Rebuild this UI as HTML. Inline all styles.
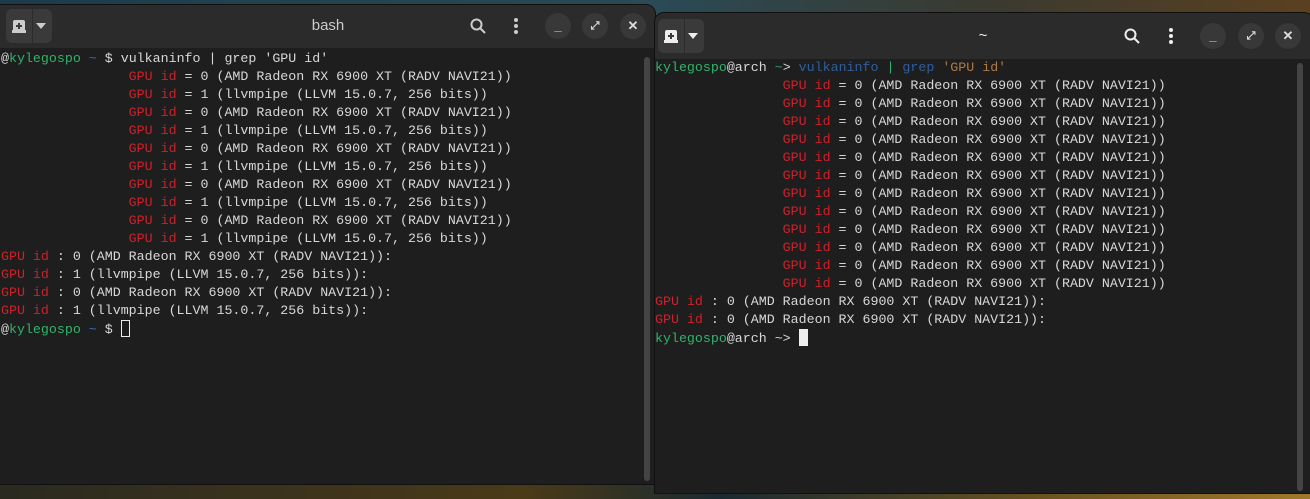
<!DOCTYPE html>
<html><head><meta charset="utf-8"><style>
*{margin:0;padding:0;box-sizing:border-box}
body{width:1310px;height:499px;overflow:hidden;position:relative;background:linear-gradient(90deg,#1d3a4a 0%,#2a4a55 50%,#3a3a30 75%,#5a4020 100%)}
.bot{position:absolute;left:0;top:470px;width:1310px;height:29px;background:linear-gradient(90deg,#2a2a20,#4a3a18 40%,#1a2a30 55%,#6a5420 80%,#a0782a)}
.win{position:absolute;background:#1e1e1e;border-radius:10px 10px 0 0;overflow:hidden;border:1px solid #111}
.hdr{position:absolute;left:0;top:0;right:0;background:#2b2b2b}
.grp{position:absolute;width:46px;height:34px;background:#3a3a3a;border-radius:6px}
.grp .sep{position:absolute;left:26px;top:0;width:1px;height:34px;background:#2b2b2b}
.circ{position:absolute;width:26px;height:26px;border-radius:50%;background:#383838;color:#ddd;font:bold 13px "Liberation Sans",sans-serif;text-align:center;line-height:26px}
.title{position:absolute;color:#ccc;font:15px "Liberation Sans",sans-serif;transform:translateX(-50%)}
.term{position:absolute;font:13.3px/18px "Liberation Mono",monospace;color:#d8d8d8;white-space:pre}
.r{color:#d0202a}.g{color:#2fb36a}.b{color:#2a6fbf}.db{color:#2f5f9f}.o{color:#b07a4a}
.cur{display:inline-block;width:9px;height:17px;border:1.5px solid #eee;vertical-align:-4px}
.sb{position:absolute;width:6px;background:#444;border-radius:3px}
</style></head><body>
<div class="bot"></div>
<div class="win" style="left:-10px;top:4px;width:666px;height:481px">
 <div class="hdr" style="height:43px"></div>
 <div class="grp" style="left:15px;top:4px"><div class="sep"></div>
  <svg style="position:absolute;left:6px;top:10px" width="14" height="14"><rect x="1" y="1" width="12" height="12" rx="2" fill="#ccc"/><path d="M7 4v6M4 7h6" stroke="#3a3a3a" stroke-width="2"/><rect x="0" y="11" width="14" height="3" fill="#ccc"/></svg>
  <svg style="position:absolute;left:30px;top:14px" width="10" height="6"><path d="M0 0h10L5 6z" fill="#ccc"/></svg>
 </div>
 <div class="title" style="left:337px;top:12px">bash</div>
 <svg style="position:absolute;left:479px;top:13px" width="16" height="16"><circle cx="6.5" cy="6.5" r="5" stroke="#ccc" stroke-width="2" fill="none"/><path d="M10 10l5 5" stroke="#ccc" stroke-width="2"/></svg>
 <svg style="position:absolute;left:522px;top:12px" width="6" height="18"><circle cx="3" cy="3" r="2" fill="#ccc"/><circle cx="3" cy="9" r="2" fill="#ccc"/><circle cx="3" cy="15" r="2" fill="#ccc"/></svg>
 <div class="circ" style="left:554px;top:8px">_</div>
 <div class="circ" style="left:591px;top:8px;font-size:11px">⤢</div>
 <div class="circ" style="left:629px;top:8px">✕</div>
 <div class="sb" style="left:653px;top:52px;height:424px"></div>
<div class="term" style="left:10px;top:45px">@<span class="g">kylegospo</span> <span class="b">~</span> $ vulkaninfo | grep 'GPU id'
                <span class="r">GPU id</span> = 0 (AMD Radeon RX 6900 XT (RADV NAVI21))
                <span class="r">GPU id</span> = 1 (llvmpipe (LLVM 15.0.7, 256 bits))
                <span class="r">GPU id</span> = 0 (AMD Radeon RX 6900 XT (RADV NAVI21))
                <span class="r">GPU id</span> = 1 (llvmpipe (LLVM 15.0.7, 256 bits))
                <span class="r">GPU id</span> = 0 (AMD Radeon RX 6900 XT (RADV NAVI21))
                <span class="r">GPU id</span> = 1 (llvmpipe (LLVM 15.0.7, 256 bits))
                <span class="r">GPU id</span> = 0 (AMD Radeon RX 6900 XT (RADV NAVI21))
                <span class="r">GPU id</span> = 1 (llvmpipe (LLVM 15.0.7, 256 bits))
                <span class="r">GPU id</span> = 0 (AMD Radeon RX 6900 XT (RADV NAVI21))
                <span class="r">GPU id</span> = 1 (llvmpipe (LLVM 15.0.7, 256 bits))
<span class="r">GPU id</span> : 0 (AMD Radeon RX 6900 XT (RADV NAVI21)):
<span class="r">GPU id</span> : 1 (llvmpipe (LLVM 15.0.7, 256 bits)):
<span class="r">GPU id</span> : 0 (AMD Radeon RX 6900 XT (RADV NAVI21)):
<span class="r">GPU id</span> : 1 (llvmpipe (LLVM 15.0.7, 256 bits)):
@<span class="g">kylegospo</span> <span class="b">~</span> $ <span class="cur"></span></div>
</div>
<div class="win" style="left:654px;top:12px;width:660px;height:482px">
 <div class="hdr" style="height:46px"></div>
 <div class="grp" style="left:3px;top:6px"><div class="sep"></div>
  <svg style="position:absolute;left:6px;top:10px" width="14" height="14"><rect x="1" y="1" width="12" height="12" rx="2" fill="#eee"/><path d="M7 4v6M4 7h6" stroke="#3a3a3a" stroke-width="2"/><rect x="0" y="11" width="14" height="3" fill="#eee"/></svg>
  <svg style="position:absolute;left:30px;top:14px" width="10" height="6"><path d="M0 0h10L5 6z" fill="#eee"/></svg>
 </div>
 <div class="title" style="left:328px;top:14px;color:#eee">~</div>
 <svg style="position:absolute;left:469px;top:15px" width="16" height="16"><circle cx="6.5" cy="6.5" r="5" stroke="#eee" stroke-width="2" fill="none"/><path d="M10 10l5 5" stroke="#eee" stroke-width="2"/></svg>
 <svg style="position:absolute;left:513px;top:14px" width="6" height="18"><circle cx="3" cy="3" r="2" fill="#eee"/><circle cx="3" cy="9" r="2" fill="#eee"/><circle cx="3" cy="15" r="2" fill="#eee"/></svg>
 <div class="circ" style="left:545px;top:10px">_</div>
 <div class="circ" style="left:583px;top:10px;font-size:11px">⤢</div>
 <div class="circ" style="left:620px;top:10px">✕</div>
 <div class="sb" style="left:642px;top:50px;height:428px"></div>
<div class="term" style="left:0px;top:46px"><span class="g">kylegospo</span>@arch <span class="g" style="color:#2a9a7a">~</span>&gt; <span class="db">vulkaninfo</span> <span class="g">|</span> <span class="db">grep</span> <span class="o">'GPU id'</span>
                <span class="r">GPU id</span> = 0 (AMD Radeon RX 6900 XT (RADV NAVI21))
                <span class="r">GPU id</span> = 0 (AMD Radeon RX 6900 XT (RADV NAVI21))
                <span class="r">GPU id</span> = 0 (AMD Radeon RX 6900 XT (RADV NAVI21))
                <span class="r">GPU id</span> = 0 (AMD Radeon RX 6900 XT (RADV NAVI21))
                <span class="r">GPU id</span> = 0 (AMD Radeon RX 6900 XT (RADV NAVI21))
                <span class="r">GPU id</span> = 0 (AMD Radeon RX 6900 XT (RADV NAVI21))
                <span class="r">GPU id</span> = 0 (AMD Radeon RX 6900 XT (RADV NAVI21))
                <span class="r">GPU id</span> = 0 (AMD Radeon RX 6900 XT (RADV NAVI21))
                <span class="r">GPU id</span> = 0 (AMD Radeon RX 6900 XT (RADV NAVI21))
                <span class="r">GPU id</span> = 0 (AMD Radeon RX 6900 XT (RADV NAVI21))
                <span class="r">GPU id</span> = 0 (AMD Radeon RX 6900 XT (RADV NAVI21))
                <span class="r">GPU id</span> = 0 (AMD Radeon RX 6900 XT (RADV NAVI21))
<span class="r">GPU id</span> : 0 (AMD Radeon RX 6900 XT (RADV NAVI21)):
<span class="r">GPU id</span> : 0 (AMD Radeon RX 6900 XT (RADV NAVI21)):
<span class="g">kylegospo</span>@arch ~&gt; <span class="cur" style="background:#eee"></span></div>
</div>
</body></html>
